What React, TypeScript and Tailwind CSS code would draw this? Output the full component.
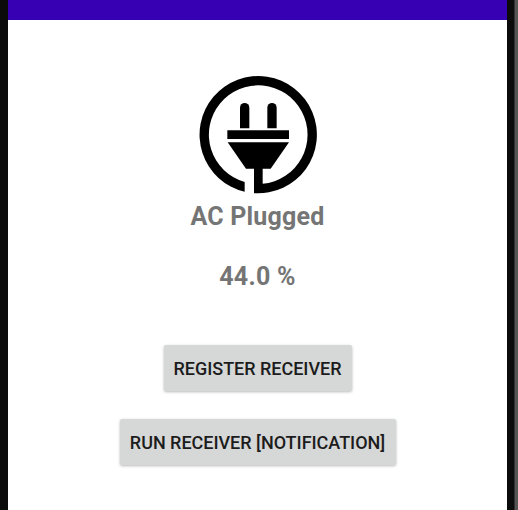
function PlugIcon() {
  return (
    <svg viewBox="0 0 408 408" className="block size-[136px]" fill="#000">
      <path d="M164 348.3A148 148 0 1 1 218 353.4V308H242L297 229H113L168 308H192V381.6A176 176 0 1 0 164 377.3Z" />
      <path d="M112 193H297V219H112Z" />
      <path d="M150 187V125a14 14 0 0 1 28 0V187Z" />
      <path d="M232 187V125a14 14 0 0 1 28 0V187Z" />
    </svg>
  );
}

function RaisedButton({ label, className }: { label: string; className: string }) {
  return (
    <button
      className={`${className} flex h-[46px] items-center justify-center rounded-[2px] bg-[#d6d7d7] pt-[2px] text-[18px] leading-none font-medium tracking-[-0.02px] whitespace-nowrap text-[#1c1c1c] shadow-[0_1px_3px_rgba(0,0,0,0.28)]`}
    >
      {label}
    </button>
  );
}

export default function App() {
  return (
    <div className="flex h-[510px] w-[518px] overflow-hidden bg-white font-[Roboto,sans-serif]">
      <div className="w-2 shrink-0 bg-[#0b0b0c]" />
      <main className="flex w-[499px] shrink-0 flex-col items-center bg-white">
        <header className="h-5 w-full shrink-0 bg-[#3700b3]" />
        <div className="mt-[46px] ml-[1px]">
          <PlugIcon />
        </div>
        <h1 className="h-[30px] text-[25px] leading-[30px] font-bold tracking-[0.2px] whitespace-nowrap text-[#757575]">AC Plugged</h1>
        <p className="mt-[30px] h-[30px] text-[25px] leading-[30px] font-bold tracking-[0.25px] whitespace-nowrap text-[#757575]">44.0 %</p>
        <RaisedButton label="REGISTER RECEIVER" className="mt-[53px] w-[188px]" />
        <RaisedButton label="RUN RECEIVER [NOTIFICATION]" className="mt-7 w-[276px]" />
      </main>
      <div className="w-[7px] shrink-0 bg-[#0b0b0c]" />
      <div className="w-px shrink-0 bg-[#303030]" />
      <div className="w-[3px] shrink-0 bg-[#555555]" />
    </div>
  );
}
